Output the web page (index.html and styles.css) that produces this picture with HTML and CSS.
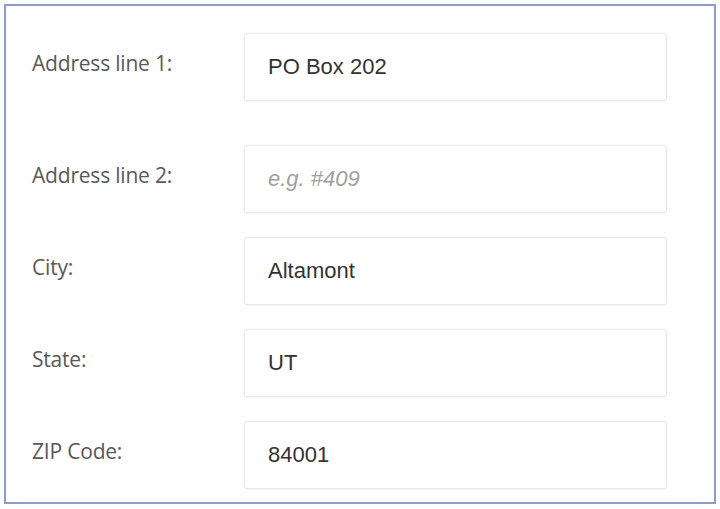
FILE: index.html
```html
<!DOCTYPE html>
<html lang="en">
<head>
<meta charset="utf-8">
<title>Address form</title>
<link rel="stylesheet" href="styles.css">
</head>
<body>
<form class="frame">
  <div class="row row-first">
    <label class="label" for="a1">Address line 1:</label>
    <input class="field" id="a1" type="text" value="PO Box 202">
  </div>
  <div class="row">
    <label class="label" for="a2">Address line 2:</label>
    <input class="field" id="a2" type="text" placeholder="e.g. #409">
  </div>
  <div class="row">
    <label class="label" for="city">City:</label>
    <input class="field" id="city" type="text" value="Altamont">
  </div>
  <div class="row">
    <label class="label" for="state">State:</label>
    <input class="field" id="state" type="text" value="UT">
  </div>
  <div class="row">
    <label class="label" for="zip">ZIP Code:</label>
    <input class="field" id="zip" type="text" value="84001">
  </div>
</form>
</body>
</html>
```

FILE: styles.css
```css
html, body {
  margin: 0;
  padding: 0;
  background: #ffffff;
}

body {
  padding: 4px;
  width: 712px;
  height: 500px;
}

.frame {
  box-sizing: border-box;
  width: 712px;
  height: 500px;
  margin: 0;
  border: 2px solid #8d9cc9;
  padding: 27px 47px 0 26px;
  display: flex;
  flex-direction: column;
  gap: 24px;
  background: #fefefe;
}

.row {
  display: flex;
  align-items: flex-start;
  height: 68px;
}

.row-first {
  margin-bottom: 20px;
}

.label {
  width: 212px;
  flex: none;
  padding-top: 16px;
  font-family: "Open Sans", sans-serif;
  font-size: 21px;
  line-height: 28px;
  letter-spacing: -0.2px;
  color: #595959;
}

.field {
  box-sizing: border-box;
  width: 423px;
  height: 68px;
  margin: 0;
  border: 1px solid #e9e9e9;
  border-radius: 3px;
  padding: 0 23px;
  background: #ffffff;
  box-shadow: 0 1px 2px rgba(0, 0, 0, 0.04);
  font-family: "Liberation Sans", Arial, sans-serif;
  font-size: 22px;
  color: #333333;
  outline: none;
}

.field::placeholder {
  color: #a0a0a0;
  font-style: italic;
}
```
